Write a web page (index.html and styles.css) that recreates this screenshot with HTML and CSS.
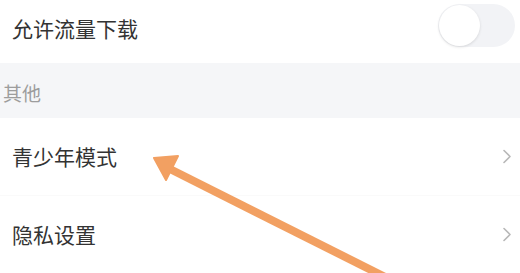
FILE: index.html
```html
<!DOCTYPE html>
<html lang="zh-CN">
<head>
<meta charset="utf-8">
<link rel="stylesheet" href="styles.css">
</head>
<body>
<div class="page">
  <div class="row row-top">
    <span class="label">允许流量下载</span>
    <span class="toggle"><span class="knob"></span></span>
  </div>
  <div class="section">其他</div>
  <div class="row row-item">
    <span class="label">青少年模式</span>
    <svg class="chev" width="10" height="15" viewBox="0 0 10 15"><path d="M2 1.5 L8 7.5 L2 13.5" fill="none" stroke="#b8b8b8" stroke-width="1.6" stroke-linecap="round" stroke-linejoin="round"/></svg>
  </div>
  <div class="row row-item">
    <span class="label">隐私设置</span>
    <svg class="chev" width="10" height="15" viewBox="0 0 10 15"><path d="M2 1.5 L8 7.5 L2 13.5" fill="none" stroke="#b8b8b8" stroke-width="1.6" stroke-linecap="round" stroke-linejoin="round"/></svg>
  </div>
  <svg class="arrow" width="520" height="273" viewBox="0 0 520 273">
    <line x1="168" y1="168" x2="395" y2="282" stroke="#f2a062" stroke-width="8"/>
    <polygon points="154,158 178,156 166,180" fill="#f2a062" stroke="#f2a062" stroke-width="2" stroke-linejoin="round"/>
  </svg>
</div>
</body>
</html>
```
FILE: styles.css
```css
html, body {
  margin: 0;
  padding: 0;
  background: #ffffff;
}
body {
  font-family: "Noto Sans CJK SC", "Noto Sans", sans-serif;
  width: 520px;
  height: 273px;
  overflow: hidden;
}
.page {
  position: relative;
  width: 520px;
  height: 273px;
}
.row {
  display: flex;
  align-items: center;
  justify-content: space-between;
  background: #ffffff;
}
.label {
  font-size: 21px;
  line-height: 1;
  color: #333333;
}
.row-top {
  height: 56px;
  padding: 0 5px 7px 12px;
}
.toggle {
  display: block;
  width: 77px;
  height: 43px;
  border-radius: 22px;
  background: #f2f3f6;
  margin-bottom: 5px;
  position: relative;
}
.knob {
  position: absolute;
  left: 1px;
  top: 1px;
  width: 41px;
  height: 41px;
  border-radius: 50%;
  background: #ffffff;
  box-shadow: 0 1px 3px rgba(0, 0, 0, 0.12);
}
.section {
  height: 51px;
  padding: 4px 0 0 3px;
  background: #f5f6f8;
  display: flex;
  align-items: center;
  font-size: 19px;
  color: #9d9d9d;
}
.row-item {
  height: 77px;
  padding: 0 8px 0 12px;
}
.row-item + .row-item {
  border-top: 1px solid #fafafa;
  height: 76px;
}
.chev {
  display: block;
}
.arrow {
  position: absolute;
  left: 0;
  top: 0;
  pointer-events: none;
}
```
